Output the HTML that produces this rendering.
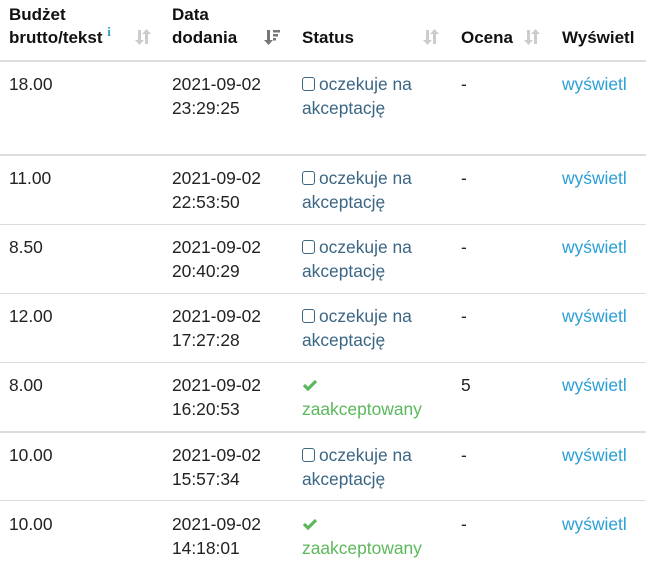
<!DOCTYPE html>
<html><head><meta charset="utf-8"><style>
body{margin:0;width:659px;height:568px;background:#fff;font-family:"Liberation Sans",Arial,Helvetica,sans-serif;font-size:17.4px;color:#222;position:relative;overflow:hidden}
.a{position:absolute;line-height:24px;white-space:nowrap}
.h{font-weight:bold;color:#111;font-size:17px}
.l{position:absolute;left:0;width:646px;height:1px;background:#ddd}
.st{color:#3b6684}
.ok{color:#5cb85c}
.lk{color:#2a9fd6}
.cb{display:inline-block;width:13px;height:14px;border:1.5px solid #3b6684;border-radius:3px;vertical-align:-1px;margin-right:4px;box-sizing:border-box}
.s{position:absolute;top:27px}
</style></head><body>
<div class="a h" style="left:9px;top:3px">Budżet</div>
<div class="a h" style="left:9px;top:26px">brutto/tekst <span style="color:#2a9fd6;font-size:13px;font-family:'Liberation Serif',serif;position:relative;top:-7px;line-height:0">i</span></div>
<svg class="s" style="left:134px" width="18" height="20" viewBox="0 0 18 20"><g fill="#ccc"><rect x="4" y="3" width="3" height="11"/><path d="M1 13h9l-4.5 5z"/><rect x="11" y="6" width="3" height="11"/><path d="M8 7h9l-4.5-5z"/></g></svg>
<div class="a h" style="left:172px;top:3px">Data</div>
<div class="a h" style="left:172px;top:26px">dodania</div>
<svg class="s" style="left:263px" width="18" height="20" viewBox="0 0 18 20"><g fill="#777"><rect x="4" y="3" width="3" height="11"/><path d="M1 13h9l-4.5 5z"/><rect x="10" y="3" width="7" height="2.5"/><rect x="10" y="7" width="5" height="2.5"/><rect x="10" y="11" width="3" height="2.5"/></g></svg>
<div class="a h" style="left:302px;top:26px">Status</div>
<svg class="s" style="left:422px" width="18" height="20" viewBox="0 0 18 20"><g fill="#ccc"><rect x="4" y="3" width="3" height="11"/><path d="M1 13h9l-4.5 5z"/><rect x="11" y="6" width="3" height="11"/><path d="M8 7h9l-4.5-5z"/></g></svg>
<div class="a h" style="left:461px;top:26px">Ocena</div>
<svg class="s" style="left:523px" width="18" height="20" viewBox="0 0 18 20"><g fill="#ccc"><rect x="4" y="3" width="3" height="11"/><path d="M1 13h9l-4.5 5z"/><rect x="11" y="6" width="3" height="11"/><path d="M8 7h9l-4.5-5z"/></g></svg>
<div class="a h" style="left:562px;top:26px">Wyświetl</div>
<div class="l" style="top:60px;height:2px"></div>

<div class="a" style="left:9px;top:72px">18.00</div>
<div class="a" style="left:172px;top:72px">2021-09-02<br>23:29:25</div>
<div class="a st" style="left:302px;top:72px"><span class="cb"></span>oczekuje na<br>akceptację</div>
<div class="a" style="left:461px;top:72px">-</div>
<div class="a lk" style="left:562px;top:72px">wyświetl</div>
<div class="l" style="top:154px;height:2px"></div>

<div class="a" style="left:9px;top:166px">11.00</div>
<div class="a" style="left:172px;top:166px">2021-09-02<br>22:53:50</div>
<div class="a st" style="left:302px;top:166px"><span class="cb"></span>oczekuje na<br>akceptację</div>
<div class="a" style="left:461px;top:166px">-</div>
<div class="a lk" style="left:562px;top:166px">wyświetl</div>
<div class="l" style="top:224px"></div>

<div class="a" style="left:9px;top:235px">8.50</div>
<div class="a" style="left:172px;top:235px">2021-09-02<br>20:40:29</div>
<div class="a st" style="left:302px;top:235px"><span class="cb"></span>oczekuje na<br>akceptację</div>
<div class="a" style="left:461px;top:235px">-</div>
<div class="a lk" style="left:562px;top:235px">wyświetl</div>
<div class="l" style="top:293px"></div>

<div class="a" style="left:9px;top:304px">12.00</div>
<div class="a" style="left:172px;top:304px">2021-09-02<br>17:27:28</div>
<div class="a st" style="left:302px;top:304px"><span class="cb"></span>oczekuje na<br>akceptację</div>
<div class="a" style="left:461px;top:304px">-</div>
<div class="a lk" style="left:562px;top:304px">wyświetl</div>
<div class="l" style="top:362px"></div>

<div class="a" style="left:9px;top:373px">8.00</div>
<div class="a" style="left:172px;top:373px">2021-09-02<br>16:20:53</div>
<div class="a ok" style="left:302px;top:373px"><svg width="16" height="14" viewBox="0 0 16 14" style="vertical-align:-1px"><path d="M2 7l4 4 8-8" stroke="#5cb85c" stroke-width="3.2" fill="none"/></svg><br>zaakceptowany</div>
<div class="a" style="left:461px;top:373px">5</div>
<div class="a lk" style="left:562px;top:373px">wyświetl</div>
<div class="l" style="top:431px;height:2px"></div>

<div class="a" style="left:9px;top:443px">10.00</div>
<div class="a" style="left:172px;top:443px">2021-09-02<br>15:57:34</div>
<div class="a st" style="left:302px;top:443px"><span class="cb"></span>oczekuje na<br>akceptację</div>
<div class="a" style="left:461px;top:443px">-</div>
<div class="a lk" style="left:562px;top:443px">wyświetl</div>
<div class="l" style="top:500px"></div>

<div class="a" style="left:9px;top:512px">10.00</div>
<div class="a" style="left:172px;top:512px">2021-09-02<br>14:18:01</div>
<div class="a ok" style="left:302px;top:512px"><svg width="16" height="14" viewBox="0 0 16 14" style="vertical-align:-1px"><path d="M2 7l4 4 8-8" stroke="#5cb85c" stroke-width="3.2" fill="none"/></svg><br>zaakceptowany</div>
<div class="a" style="left:461px;top:512px">-</div>
<div class="a lk" style="left:562px;top:512px">wyświetl</div>
</body></html>
